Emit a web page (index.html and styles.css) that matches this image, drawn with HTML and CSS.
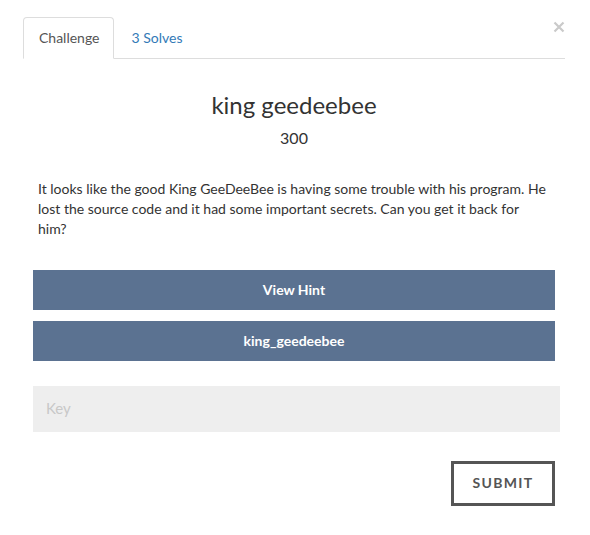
FILE: index.html
```html
<!DOCTYPE html>
<html>
<head>
<meta charset="utf-8">
<link rel="stylesheet" href="styles.css">
</head>
<body>
<div class="modal">
  <button class="close" aria-label="Close">
    <svg width="12" height="12" viewBox="0 0 12 12"><path d="M1.5 1.5 L10.5 10.5 M10.5 1.5 L1.5 10.5" stroke="#cacaca" stroke-width="2.2" fill="none"/></svg>
  </button>
  <ul class="tabs">
    <li class="tab active">Challenge</li>
    <li class="tab link">3 Solves</li>
  </ul>
  <div class="content">
    <h3 class="title">king geedeebee</h3>
    <h4 class="value">300</h4>
    <p class="desc">It looks like the good King GeeDeeBee is having some trouble with his program. He lost the source code and it had some important secrets. Can you get it back for him?</p>
    <div class="btn">View Hint</div>
    <div class="btn">king_geedeebee</div>
    <input class="key" type="text" placeholder="Key">
    <div class="actions">
      <button class="submit">SUBMIT</button>
    </div>
  </div>
</div>
</body>
</html>
```
FILE: styles.css
```css
* { box-sizing: border-box; }
html, body { margin: 0; background: #fff; }
body {
  font-family: Lato, "Open Sans", sans-serif;
  font-size: 14px;
  color: #333;
}
.modal {
  position: relative;
  width: 590px;
  padding: 17px 25px 0 23px;
}
.close {
  position: absolute;
  top: 21px;
  left: 553px;
  width: 12px;
  height: 12px;
  padding: 0;
  border: 0;
  background: none;
  display: block;
}
.close svg { display: block; }
.tabs {
  list-style: none;
  margin: 0;
  padding: 0;
  display: flex;
  border-bottom: 1px solid #ddd;
}
.tab {
  padding: 10px 15px;
  line-height: 20px;
  border: 1px solid transparent;
  border-radius: 4px 4px 0 0;
  margin-right: 2px;
  margin-bottom: -1px;
}
.tab.active {
  padding-right: 13px;
  color: #555;
  border-color: #ddd #ddd transparent;
  background: #fff;
}
.tab.link { color: #337ab7; }
.content {
  padding: 0 10px;
  display: flex;
  flex-direction: column;
}
.title {
  margin: 32px 0 0;
  font-size: 24px;
  line-height: 28px;
  font-weight: 400;
  text-align: center;
  color: #333;
}
.value {
  margin: 9px 0 0;
  font-size: 16px;
  line-height: 20px;
  font-weight: 400;
  text-align: center;
  color: #333;
}
.desc {
  margin: 31px 0 0;
  padding-left: 5px;
  width: 516px;
  line-height: 20px;
}
.btn {
  height: 40px;
  display: flex;
  align-items: center;
  justify-content: center;
  padding-bottom: 2px;
  background: #5b7291;
  color: #fff;
  font-weight: 700;
  margin-top: 11px;
}
.desc + .btn { margin-top: 31px; }
.key {
  margin: 25px -5px 0 0;
  height: 46px;
  border: 0;
  background: #eee;
  padding: 0 13px 2px;
  font-family: inherit;
  font-size: 15px;
  color: #333;
  outline: none;
}
.key::placeholder { color: #c8c8c8; }
.actions {
  display: flex;
  justify-content: flex-end;
  margin-top: 29px;
}
.submit {
  width: 104px;
  height: 45px;
  border: 3px solid #555;
  background: #fff;
  color: #555;
  font-family: inherit;
  font-size: 14px;
  font-weight: 700;
  letter-spacing: 1.3px;
  padding: 0 0 2px;
}
```
